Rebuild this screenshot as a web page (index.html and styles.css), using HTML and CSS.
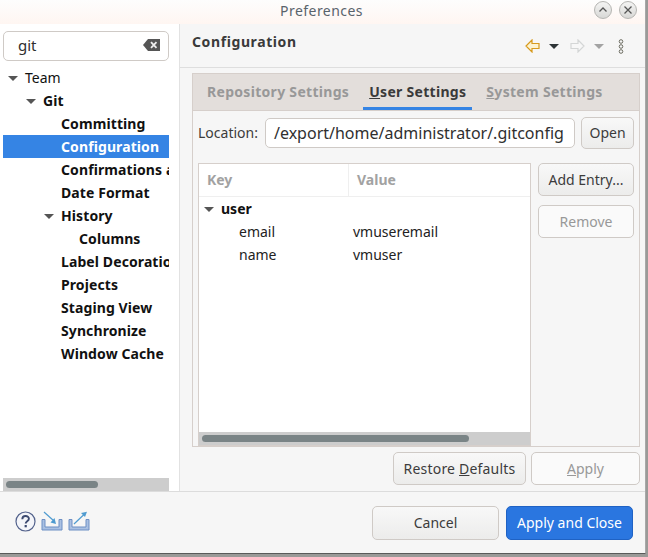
FILE: index.html
```html
<!DOCTYPE html>
<html lang="en">
<head>
    <meta charset="UTF-8">
    <title>Preferences</title>
    <link rel="stylesheet" href="styles.css">
</head>
<body>
    <div class="window">
        <div class="titlebar">
            <span class="title">Preferences</span>
            <div class="win-buttons">
                <span class="win-btn">
                    <svg width="10" height="10" viewBox="0 0 10 10"><path d="M1.5 6.5 5 3l3.5 3.5" fill="none" stroke="#555" stroke-width="1.3"/></svg>
                </span>
                <span class="win-btn">
                    <svg width="10" height="10" viewBox="0 0 10 10"><path d="M1.5 1.5l7 7M8.5 1.5l-7 7" fill="none" stroke="#555" stroke-width="1.3"/></svg>
                </span>
            </div>
        </div>

        <div class="main">
            <div class="sidebar">
                <div class="search">
                    <span>git</span>
                    <svg width="17" height="12" viewBox="0 0 17 12"><path d="M5 0h12v12H5L0 6z" fill="#555"/><path d="M8 3.2l5.5 5.6M13.5 3.2L8 8.8" stroke="#eee" stroke-width="1.8"/></svg>
                </div>
                <ul class="tree">
                    <li class="row lvl0"><i class="arrow"></i>Team</li>
                    <li class="row lvl1 bold"><i class="arrow"></i>Git</li>
                    <li class="row lvl2 bold">Committing</li>
                    <li class="row lvl2 bold selected">Configuration</li>
                    <li class="row lvl2 bold">Confirmations and</li>
                    <li class="row lvl2 bold">Date Format</li>
                    <li class="row lvl1b bold"><i class="arrow"></i>History</li>
                    <li class="row lvl3 bold">Columns</li>
                    <li class="row lvl2 bold">Label Decorations</li>
                    <li class="row lvl2 bold">Projects</li>
                    <li class="row lvl2 bold">Staging View</li>
                    <li class="row lvl2 bold">Synchronize</li>
                    <li class="row lvl2 bold">Window Cache</li>
                </ul>
                <div class="hscroll side-scroll"><div class="thumb side-thumb"></div></div>
            </div>

            <div class="content">
                <div class="page-head">
                    <h1>Configuration</h1>
                    <div class="nav-icons">
                        <svg width="15" height="14" viewBox="0 0 15 14"><path d="M7 1 1 7l6 6V9.5h7v-5H7z" fill="#fdf3d0" stroke="#d79a1e" stroke-width="1.2"/></svg>
                        <i class="drop dark"></i>
                        <svg class="fwd" width="15" height="14" viewBox="0 0 15 14"><path d="M8 1l6 6-6 6V9.5H1v-5h7z" fill="#f7f7f7" stroke="#d4d6d6" stroke-width="1.2"/></svg>
                        <i class="drop"></i>
                        <svg class="menu" width="6" height="15" viewBox="0 0 6 15"><g fill="none" stroke="#6b6b60"><circle cx="3" cy="2.5" r="1.8"/><circle cx="3" cy="7.5" r="1.8"/><circle cx="3" cy="12.5" r="1.8"/></g></svg>
                    </div>
                </div>

                <div class="tab-folder">
                    <div class="tabs">
                        <span class="tab">Repository Settin<u>g</u>s</span>
                        <span class="tab active"><u>U</u>ser Settings</span>
                        <span class="tab"><u>S</u>ystem Settings</span>
                    </div>
                    <div class="tab-body">
                        <div class="location">
                            <label>Location:</label>
                            <div class="field">/export/home/administrator/.gitconfig</div>
                            <button class="btn open-btn">Open</button>
                        </div>
                        <div class="table-row">
                            <div class="table">
                                <div class="thead">
                                    <span class="col-key">Key</span>
                                    <span class="col-value">Value</span>
                                </div>
                                <div class="tbody">
                                    <div class="trow bold"><span class="col-key"><i class="arrow"></i>user</span></div>
                                    <div class="trow"><span class="col-key indent">email</span><span class="col-val">vmuseremail</span></div>
                                    <div class="trow"><span class="col-key indent">name</span><span class="col-val">vmuser</span></div>
                                </div>
                                <div class="hscroll"><div class="thumb table-thumb"></div></div>
                            </div>
                            <div class="side-buttons">
                                <button class="btn">Add Entry...</button>
                                <button class="btn disabled">Remove</button>
                            </div>
                        </div>
                    </div>
                </div>

                <div class="page-buttons">
                    <button class="btn restore">Restore <u>D</u>efaults</button>
                    <button class="btn disabled apply"><u>A</u>pply</button>
                </div>
            </div>
        </div>

        <div class="footer">
            <div class="footer-icons">
                <svg width="21" height="21" viewBox="0 0 21 21"><circle cx="10.5" cy="10.5" r="9.5" fill="#f4f5f9" stroke="#53628c" stroke-width="1.2"/><path d="M7.3 8.2c0-4.2 6.6-4.2 6.6-.4 0 2.5-3.2 2.5-3.2 4.6" fill="none" stroke="#3c4a70" stroke-width="1.9"/><rect x="9.6" y="14" width="2.2" height="2.3" fill="#3c4a70"/></svg>
                <svg width="22" height="20" viewBox="0 0 22 20"><path d="M1 8.5v10.5h20V8.5h-3v7.5H4V8.5z" fill="#a9c0e2" stroke="#6d8fc4"/><path d="M3 1l10 9" stroke="#4f9bd0" stroke-width="1.2"/><path d="M15 13l-1.5-6-4 4.5z" fill="#4f9bd0"/></svg>
                <svg width="22" height="20" viewBox="0 0 22 20"><path d="M1 8.5v10.5h20V8.5h-3v7.5H4V8.5z" fill="#a9c0e2" stroke="#6d8fc4"/><path d="M6 13l10-9.5" stroke="#4f9bd0" stroke-width="1.2"/><path d="M19 .8l-6 1.2 4 4z" fill="#4f9bd0"/></svg>
            </div>
            <div class="footer-buttons">
                <button class="btn big">Cancel</button>
                <button class="btn big primary">Apply and Close</button>
            </div>
        </div>
    </div>
</body>
</html>
```

FILE: styles.css
```css
* {
    box-sizing: border-box;
}

html, body {
    margin: 0;
    padding: 0;
}

body {
    width: 648px;
    height: 557px;
    overflow: hidden;
    background-color: #9a9a98;
    font-family: "Noto Sans", sans-serif;
    font-size: 14px;
    color: #3c3c3c;
}

.window {
    width: 646px;
    height: 554px;
    background-color: #f6f6f6;
    border-bottom: 1px solid #5a5a5a;
    border-right: 1px solid #a8a8a8;
    display: flex;
    flex-direction: column;
}

.titlebar {
    height: 24px;
    flex: none;
    display: flex;
    justify-content: flex-end;
    align-items: center;
    position: relative;
    background: linear-gradient(#fdfdfd, #fff6f2);
    padding-right: 8px;
}

.title {
    position: absolute;
    left: 0;
    right: 0;
    top: 1px;
    text-align: center;
    color: #59636c;
    font-size: 14px;
    line-height: 20px;
    letter-spacing: 0.45px;
    padding-right: 2px;
}

.win-buttons {
    display: flex;
    gap: 7px;
    margin-top: -4px;
}

.win-btn {
    width: 18px;
    height: 18px;
    border-radius: 50%;
    border: 1px solid #b5b5b2;
    background: linear-gradient(#f4f4f3, #d8d8d6);
    display: flex;
    align-items: center;
    justify-content: center;
}

.main {
    flex: 1;
    display: flex;
    min-height: 0;
    border-bottom: 1px solid #dcdcdc;
}

.bold {
    font-weight: 700;
}

.sidebar {
    width: 180px;
    flex: none;
    background-color: #fff;
    border-right: 1px solid #e2e2e2;
    padding: 7px 10px 0 3px;
    display: flex;
    flex-direction: column;
}

.search {
    height: 30px;
    flex: none;
    border: 1px solid #cfcac6;
    border-radius: 5px;
    display: flex;
    align-items: center;
    justify-content: space-between;
    padding: 0 8px 2px 14px;
    font-size: 15px;
    color: #2f2f2f;
}

.tree {
    list-style: none;
    margin: 5px 0 0;
    padding: 0;
    flex: 1;
    overflow: hidden;
    color: #111;
}

.row {
    height: 23px;
    line-height: 23px;
    white-space: nowrap;
    overflow: hidden;
    font-size: 14px;
}

.row.bold {
    letter-spacing: 0.1px;
}

.lvl0 { padding-left: 5px; }
.lvl1 { padding-left: 23px; }
.lvl1b { padding-left: 41px; }
.lvl2 { padding-left: 58px; }
.lvl3 { padding-left: 76px; }

.selected {
    background-color: #3584e4;
    color: #fff;
}

.arrow {
    display: inline-block;
    width: 0;
    height: 0;
    border-left: 5px solid transparent;
    border-right: 5px solid transparent;
    border-top: 5px solid #555;
    margin-right: 7px;
    vertical-align: 2px;
}

.hscroll {
    height: 13px;
    flex: none;
    background-color: #cdcdcd;
    padding: 3px;
}

.thumb {
    height: 7px;
    background-color: #7a8486;
    border-radius: 4px;
}

.side-thumb {
    width: 92px;
}

.content {
    flex: 1;
    min-width: 0;
    padding: 0 5px 0 12px;
    display: flex;
    flex-direction: column;
}

.page-head {
    height: 44px;
    flex: none;
    margin: 0 -5px 0 -12px;
    padding: 0 21px 5px 12px;
    border-bottom: 1px solid #dedede;
    display: flex;
    align-items: center;
    justify-content: space-between;
}

h1 {
    margin: 0 0 4px;
    font-size: 14px;
    font-weight: 700;
    letter-spacing: 0.6px;
    color: #3a3a3a;
}

.nav-icons {
    display: flex;
    align-items: center;
    margin-top: 6px;
}

.drop {
    display: inline-block;
    width: 0;
    height: 0;
    border-left: 5px solid transparent;
    border-right: 5px solid transparent;
    border-top: 5px solid #a3a3a3;
    margin: 0 18px 0 9px;
}

.drop.dark {
    border-top-color: #2e3436;
    margin-right: 11px;
}

.menu {
    margin-left: -4px;
}

.tab-folder {
    margin-top: 5px;
    height: 374px;
    flex: none;
    border: 1px solid #d6cfcb;
    display: flex;
    flex-direction: column;
    background-color: #f6f6f6;
}

.tabs {
    height: 37px;
    flex: none;
    background-color: #e3dedb;
    border-bottom: 1px solid #d6cfcb;
    display: flex;
    gap: 8px;
    padding-left: 8px;
}

.tab {
    padding: 0 6px;
    font-size: 14px;
    font-weight: 700;
    line-height: 36px;
    color: #989898;
    letter-spacing: 0.3px;
    white-space: nowrap;
}

.tab.active {
    color: #3a3a3a;
    border-bottom: 3px solid #3584e4;
    height: 36px;
}

.tab-body {
    flex: 1;
    min-height: 0;
    padding: 5px 5px 0;
    display: flex;
    flex-direction: column;
}

.location {
    height: 33px;
    flex: none;
    display: flex;
    align-items: center;
}

.location label {
    width: 67px;
    flex: none;
}

.field {
    width: 311px;
    height: 30px;
    border: 1px solid #cfcac6;
    border-radius: 5px;
    background-color: #fff;
    font-size: 16px;
    line-height: 28px;
    padding-left: 8px;
    color: #2f2f2f;
    white-space: nowrap;
    overflow: hidden;
}

.btn {
    font-family: inherit;
    font-size: 14px;
    color: #3c3c3c;
    border: 1px solid #cfcac6;
    border-radius: 5px;
    background: linear-gradient(#f8f8f8, #ececeb);
    padding: 0;
    height: 33px;
}

.btn.disabled {
    background: #fafafa;
    color: #989898;
}

.open-btn {
    width: 53px;
    margin-left: 6px;
    height: 32px;
}

.table-row {
    flex: 1;
    min-height: 0;
    display: flex;
    margin-top: 14px;
}

.table {
    width: 333px;
    flex: none;
    background-color: #fff;
    border: 1px solid #d6cfcb;
    display: flex;
    flex-direction: column;
}

.thead {
    height: 33px;
    flex: none;
    display: flex;
    border-bottom: 1px solid #efefef;
    font-weight: 700;
    color: #a2a2a2;
    line-height: 32px;
}

.thead .col-key {
    width: 150px;
    padding-left: 8px;
    border-right: 1px solid #efefef;
}

.thead .col-value {
    padding-left: 8px;
}

.tbody {
    flex: 1;
    color: #222;
}

.trow {
    height: 23px;
    line-height: 23px;
    display: flex;
}

.trow .col-key {
    width: 149px;
    padding-left: 5px;
    flex: none;
    color: #111;
}

.trow .col-key.indent {
    padding-left: 40px;
    color: #222;
}

.col-val {
    padding-left: 5px;
}

.table-thumb {
    width: 267px;
}

.side-buttons {
    margin-left: 7px;
    width: 96px;
    display: flex;
    flex-direction: column;
    gap: 9px;
}

.page-buttons {
    display: flex;
    justify-content: flex-end;
    gap: 5px;
    margin-top: 5px;
}

.restore {
    width: 133px;
    letter-spacing: 0.2px;
}

.apply {
    width: 109px;
}

.footer {
    height: 61px;
    flex: none;
    display: flex;
    justify-content: space-between;
    padding: 14px 12px 0 15px;
}

.footer-icons {
    display: flex;
    gap: 5px;
    align-items: flex-start;
    padding-top: 5px;
}

.footer-buttons {
    display: flex;
    gap: 7px;
}

.big {
    width: 127px;
    height: 34px;
    padding-bottom: 2px;
}

.primary {
    background: #2a76e0;
    border-color: #1f62c4;
    color: #fff;
}
```
